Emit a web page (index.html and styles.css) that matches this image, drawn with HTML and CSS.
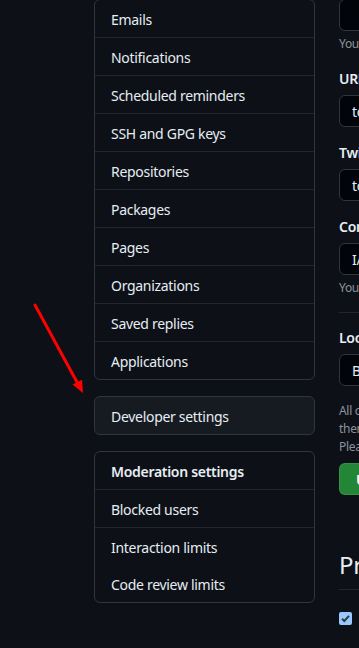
FILE: index.html
```html
<html>
    <head>
        <link rel="stylesheet" href="styles.css">
    </head>
    <body>
        <div class="page">
            <nav class="sidebar">
                <div class="menu first">
                    <a class="menu-item">Emails</a>
                    <a class="menu-item">Notifications</a>
                    <a class="menu-item">Scheduled reminders</a>
                    <a class="menu-item">SSH and GPG keys</a>
                    <a class="menu-item">Repositories</a>
                    <a class="menu-item">Packages</a>
                    <a class="menu-item">Pages</a>
                    <a class="menu-item">Organizations</a>
                    <a class="menu-item">Saved replies</a>
                    <a class="menu-item">Applications</a>
                </div>

                <div class="menu dev">
                    <a class="menu-item">Developer settings</a>
                </div>

                <div class="menu">
                    <h3 class="menu-heading">Moderation settings</h3>
                    <a class="menu-item">Blocked users</a>
                    <a class="menu-item plain">Interaction limits</a>
                    <a class="menu-item">Code review limits</a>
                </div>
            </nav>

            <main class="content">
                <div class="input top-input"></div>
                <p class="note">You can @mention other users and organizations to link to them.</p>

                <label class="label">URL</label>
                <div class="input">tom.example.dev</div>

                <label class="label">Twitter username</label>
                <div class="input">tomexample</div>

                <label class="label">Company</label>
                <div class="input">I/O Labs</div>
                <p class="note">You can @mention your company's GitHub organization to link it.</p>

                <hr class="rule">

                <label class="label">Location</label>
                <div class="input">Berlin, Germany</div>
                <p class="note long">All of the fields on this page are optional and can be deleted at any time, and by filling<br>them out, you're giving us consent to share this data wherever your user profile appears.<br>Please see our privacy statement to learn more about how we use this information.</p>

                <button class="btn">Update profile</button>

                <h2 class="section-title">Profile settings</h2>
                <div class="check-row">
                    <span class="checkbox">
                        <svg width="13" height="13" viewBox="0 0 13 13">
                            <path d="M3 6.8 L5.3 9 L10 3.8" fill="none" stroke="#333a42" stroke-width="2"/>
                        </svg>
                    </span>
                    <span>Show Achievements on my profile</span>
                </div>
            </main>
        </div>

        <!-- annotation arrow drawn over the page -->
        <svg class="arrow" width="100" height="110" viewBox="0 0 100 110">
            <line x1="35" y1="5" x2="78" y2="84" stroke="#ff0000" stroke-width="3" stroke-linecap="round"/>
            <polygon points="83,93 72.5,84.5 82,79.8" fill="#ff0000"/>
        </svg>
    </body>
</html>
```

FILE: styles.css
```css
html
{
    color-scheme: dark;
}

body
{
    margin: 0;
    background: #0d1117;
    color: #e6edf3;
    font-family: "Segoe UI", "Noto Sans", "Liberation Sans", sans-serif;
    font-size: 14px;
    letter-spacing: -0.3px;
    overflow: hidden;
    height: 648px;
}

.page
{
    display: flex;
    gap: 24px;
    padding-left: 94px;
}

.sidebar
{
    width: 221px;
    flex: 0 0 221px;
    display: flex;
    flex-direction: column;
    gap: 16px;
}

.menu
{
    display: flex;
    flex-direction: column;
    border: 1px solid #30363d;
    border-radius: 6px;
}

.menu.first
{
    margin-top: -1px;
}

.menu.dev
{
    background: #161b22;
}

.menu-item, .menu-heading
{
    display: flex;
    align-items: center;
    height: 37px;
    padding: 1px 16px 0 16px;
    box-sizing: border-box;
    border-bottom: 1px solid #21262d;
    color: #e6edf3;
    font-size: 14px;
}

.menu-item
{
    height: 38px;
}

.menu-heading
{
    height: 38px;
    margin: 0;
    font-weight: 600;
}

.menu-item:last-child, .menu-item.plain
{
    border-bottom: none;
    height: 37px;
}

.content
{
    flex: 0 0 440px;
    display: flex;
    flex-direction: column;
    align-items: flex-start;
}

.input
{
    box-sizing: border-box;
    width: 440px;
    height: 32px;
    padding: 0 12px;
    display: flex;
    align-items: center;
    background: #010409;
    border: 1px solid #30363d;
    border-radius: 6px;
    white-space: nowrap;
    margin-top: 6px;
}

.top-input
{
    margin-top: -1px;
}

.note
{
    margin: 4px 0 0 0;
    font-size: 12px;
    line-height: 18px;
    color: #8b949e;
    white-space: nowrap;
}

.note.long
{
    margin-top: 16px;
}

.label
{
    display: block;
    margin-top: 16px;
    font-weight: 600;
    line-height: 20px;
    white-space: nowrap;
}

.rule
{
    width: 440px;
    margin: 15px 0 0 0;
    border: none;
    border-top: 1px solid #21262d;
}

.rule + .label
{
    margin-top: 15px;
}

.btn
{
    margin-top: 7px;
    height: 32px;
    padding: 0 16px;
    background: #238636;
    border: 1px solid rgba(240, 246, 252, 0.1);
    border-radius: 6px;
    color: #ffffff;
    font-family: inherit;
    font-size: 14px;
    font-weight: 600;
    white-space: nowrap;
}

.section-title
{
    width: 440px;
    margin: 54px 0 0 0;
    padding-bottom: 8px;
    font-size: 24px;
    font-weight: 400;
    line-height: 32px;
    border-bottom: 1px solid #21262d;
    white-space: nowrap;
}

.check-row
{
    display: flex;
    align-items: center;
    gap: 8px;
    margin-top: 19px;
    font-weight: 600;
    white-space: nowrap;
}

.checkbox
{
    display: block;
    width: 13px;
    height: 13px;
    background: #99c8ff;
    border-radius: 2px;
}

.checkbox svg
{
    display: block;
}

.arrow
{
    position: absolute;
    left: 0;
    top: 300px;
}
```
